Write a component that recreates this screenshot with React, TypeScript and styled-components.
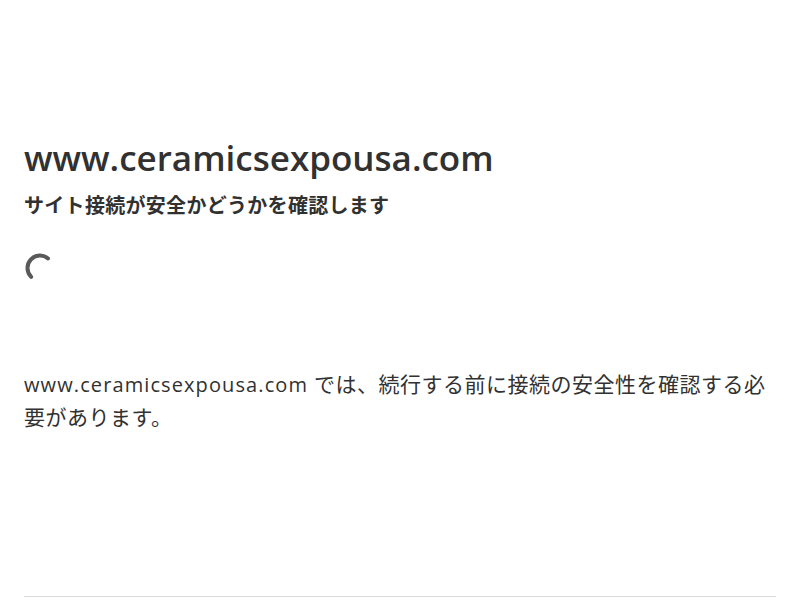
import React from "react";
import styled, { createGlobalStyle } from "styled-components";

const Global = createGlobalStyle`
  html, body { margin: 0; padding: 0; background: #ffffff; }
  body {
    font-family: "Open Sans", "Noto Sans CJK JP", sans-serif;
    color: #313131;
  }
`;

const Page = styled.div`
  display: flex;
  flex-direction: column;
  min-height: 600px;
`;

const Main = styled.main`
  padding: 128px 24px 0;
  display: flex;
  flex-direction: column;
  flex: 1;
`;

const Title = styled.h1`
  margin: 0;
  font-size: 35px;
  line-height: 60px;
  font-weight: 600;
  color: #313131;
`;

const Subtitle = styled.h2`
  margin: 0;
  font-size: 20px;
  line-height: 36px;
  font-weight: 700;
  letter-spacing: 0.3px;
  color: #313131;
`;

const SpinnerBox = styled.div`
  margin-top: 28px;
  width: 32px;
  height: 32px;
  display: flex;
`;

const Body = styled.p`
  margin: 84px 0 0;
  font-size: 21px;
  line-height: 33px;
  letter-spacing: 0.5px;
  color: #313131;
`;

const Domain = styled.span`
  font-size: 20px;
  letter-spacing: 1.1px;
`;

const Footer = styled.footer`
  margin: 0 24px;
  border-top: 1px solid #d9d9d9;
  height: 3px;
  margin-top: auto;
`;

function Spinner() {
  const r = 12.5;
  const cx = 16;
  const cy = 16;
  const a0 = (-50 * Math.PI) / 180;
  const x0 = cx + r * Math.cos(a0);
  const y0 = cy + r * Math.sin(a0);
  const x1 = cx - r * Math.cos(Math.PI / 4);
  const y1 = cy + r * Math.sin(Math.PI / 4);
  return (
    <svg width="32" height="32" viewBox="0 0 32 32">
      <path
        d={`M ${x0.toFixed(2)} ${y0.toFixed(2)} A ${r} ${r} 0 0 0 ${x1.toFixed(2)} ${y1.toFixed(2)}`}
        fill="none"
        stroke="#595959"
        strokeWidth="4"
        strokeLinecap="round"
      />
    </svg>
  );
}

export default function App() {
  return (
    <Page>
      <Global />
      <Main>
        <Title>www.ceramicsexpousa.com</Title>
        <Subtitle>サイト接続が安全かどうかを確認します</Subtitle>
        <SpinnerBox>
          <Spinner />
        </SpinnerBox>
        <Body>
          <Domain>www.ceramicsexpousa.com</Domain> では、続行する前に接続の安全性を確認する必要があります。
        </Body>
      </Main>
      <Footer />
    </Page>
  );
}
